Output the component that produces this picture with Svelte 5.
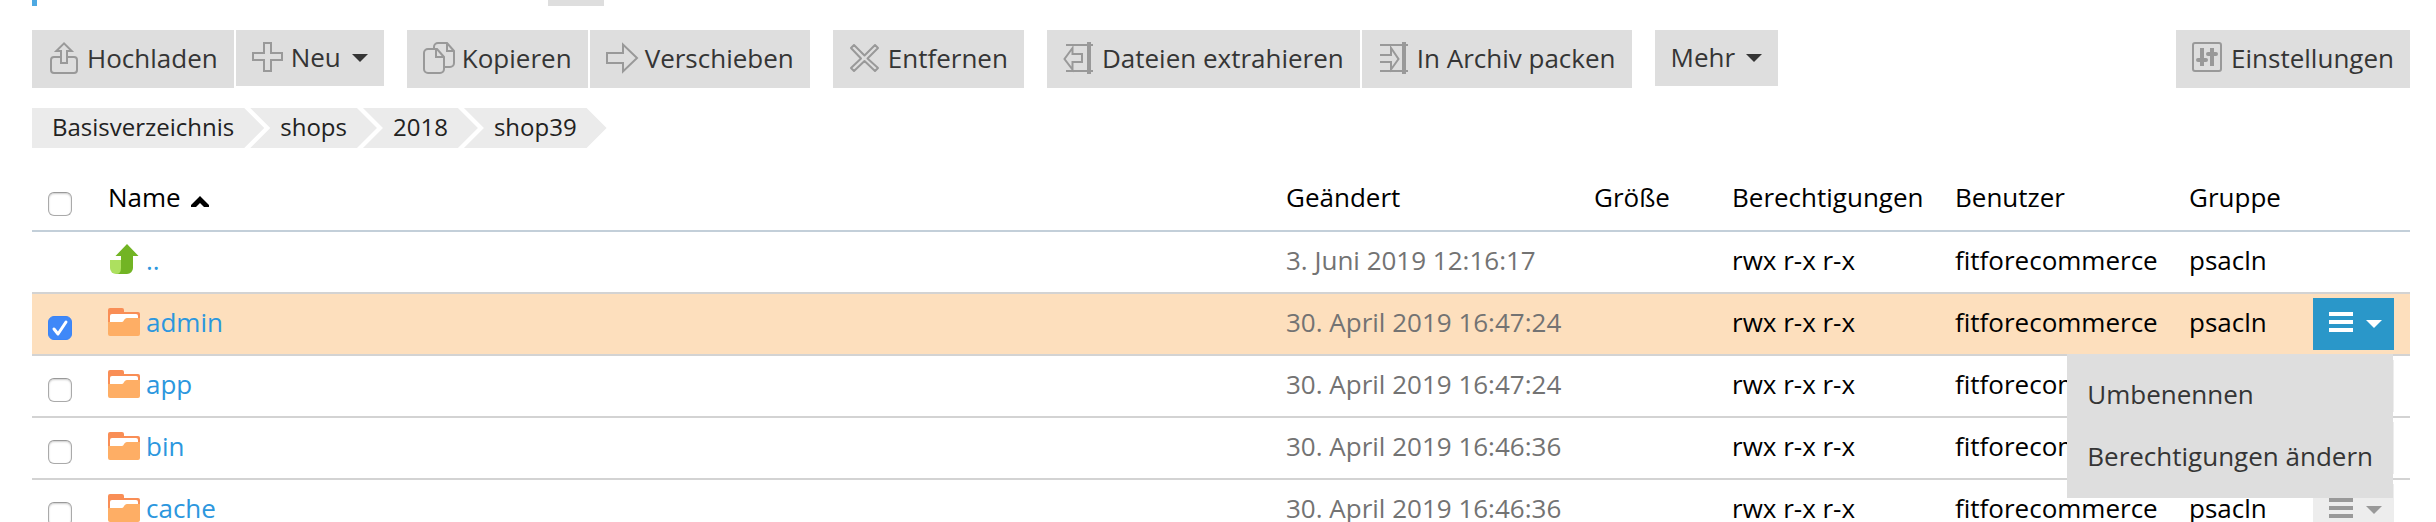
<script>
  const groups = [
    [
      { label: 'Hochladen', icon: 'upload' },
      { label: 'Neu', icon: 'plus', menu: true }
    ],
    [
      { label: 'Kopieren', icon: 'copy' },
      { label: 'Verschieben', icon: 'move' }
    ],
    [{ label: 'Entfernen', icon: 'remove' }],
    [
      { label: 'Dateien extrahieren', icon: 'extract' },
      { label: 'In Archiv packen', icon: 'pack' }
    ],
    [{ label: 'Mehr', menu: true }]
  ];

  const crumbs = ['Basisverzeichnis', 'shops', '2018', 'shop39'];

  let rows = $state([
    { name: 'admin', changed: '30. April 2019 16:47:24', checked: true },
    { name: 'app', changed: '30. April 2019 16:47:24', checked: false },
    { name: 'bin', changed: '30. April 2019 16:46:36', checked: false },
    { name: 'cache', changed: '30. April 2019 16:46:36', checked: false }
  ]);

  let openRow = $state('admin');
</script>

{#snippet icon(name)}
  <svg class="icon" viewBox="0 0 32 32" aria-hidden="true">
    {#if name === 'upload'}
      <path d="M13 15H6a3 3 0 0 0-3 3v10a3 3 0 0 0 3 3h20a3 3 0 0 0 3-3V18a3 3 0 0 0-3-3h-7" />
      <path d="M16 1.400L8.300 9H13v12h6V9h4.700z" />
    {:else if name === 'plus'}
      <path d="M12 1h7v10h11v7H19v11h-7V18H1v-7h11z" />
    {:else if name === 'copy'}
      <path d="M5 7h9l7 8v12a4 4 0 0 1-4 4H5a4 4 0 0 1-4-4V11a4 4 0 0 1 4-4z" />
      <path d="M13 7v8h8M11 7V5a4 4 0 0 1 4-4h9l7 8v12a4 4 0 0 1-4 4h-6M24 1v8h7" />
    {:else if name === 'move'}
      <path d="M1 11h16V2.500L31 16 17 29.500V21H1z" />
    {:else if name === 'remove'}
      <path stroke-linejoin="round" d="M5 3l10.500 10.500L26 3l3 3-10.500 10.500L29 26l-3 3-10.500-10L5 29l-3-3 10-9.500L2 6z" />
    {:else if name === 'extract'}
      <path d="M3 3h27M3 29h27" />
      <path class="thick" d="M26 0v32" />
      <path d="M9.500 6L1.500 17l8 10.500V20H19v-8H9.500z" />
    {:else if name === 'pack'}
      <path d="M2 3h28M2 29h28" />
      <path class="thick" d="M26 0v32" />
      <path d="M2 13h11V6l7.500 11-7.500 10.500V20H2" />
    {:else if name === 'settings'}
      <rect x="1" y="1" width="28" height="28" rx="2" />
      <path class="thick" d="M10 6v18M20 6v18" />
      <path class="thick" stroke-linecap="round" d="M6 18h8M16 12h8" />
    {/if}
  </svg>
{/snippet}

{#snippet folder()}
  <svg class="folder" viewBox="0 0 32 28" aria-hidden="true">
    <path fill="#f98e56" d="M2 0h12a2 2 0 0 1 2 2v2h14a2 2 0 0 1 2 2v14H0V2a2 2 0 0 1 2-2z" />
    <path fill="#fff" d="M4 6h24a2 2 0 0 1 2 2v6H2V8a2 2 0 0 1 2-2z" />
    <path fill="#feae65" d="M0 14h14c2 0 2-4 5-4h13v16a2 2 0 0 1-2 2H2a2 2 0 0 1-2-2z" />
  </svg>
{/snippet}

<main>
  <div class="tabs"><span class="marker"></span><span class="tab"></span></div>

  <div class="toolbar">
    {#each groups as group}
      <div class="group">
        {#each group as item}
          <button type="button" class="tool" class:drop={item.menu}>
            {#if item.icon}{@render icon(item.icon)}{/if}
            <span>{item.label}</span>
            {#if item.menu}<span class="caret"></span>{/if}
          </button>
        {/each}
      </div>
    {/each}
    <button type="button" class="tool last">{@render icon('settings')}<span>Einstellungen</span></button>
  </div>

  <nav class="crumbs">
    {#each crumbs as crumb}<a href="#{crumb}">{crumb}</a>{/each}
  </nav>

  <table>
    <colgroup>
      <col class="c-check" /><col /><col class="c-changed" /><col class="c-size" />
      <col class="c-rights" /><col class="c-user" /><col class="c-group" /><col class="c-action" />
    </colgroup>
    <thead>
      <tr>
        <th><input type="checkbox" aria-label="Name" /></th>
        <th>
          Name
          <svg class="sort" viewBox="0 0 18 11" aria-hidden="true"><path d="M0 11V9L9 0l9 9v2h-5L9 7l-4 4z" /></svg>
        </th>
        <th>Geändert</th>
        <th>Größe</th>
        <th>Berechtigungen</th>
        <th>Benutzer</th>
        <th>Gruppe</th>
        <th></th>
      </tr>
    </thead>
    <tbody>
      <tr>
        <td></td>
        <td>
          <a class="file" href="#up">
            <svg class="folder" viewBox="0 0 32 28" aria-hidden="true">
              <path fill="#ade05f" d="M2 14h12v14H8a6 6 0 0 1-6-6z" />
              <path fill="#72b424" d="M19-2L30.500 10H25v12a6 6 0 0 1-6 6H8q5 0 5-6V10H7.500z" />
            </svg>
            ..
          </a>
        </td>
        <td class="muted">3. Juni 2019 12:16:17</td>
        <td></td>
        <td>rwx r-x r-x</td>
        <td>fitforecommerce</td>
        <td>psacln</td>
        <td></td>
      </tr>
      {#each rows as row}
        <tr class:selected={row.checked}>
          <td><input type="checkbox" aria-label={row.name} bind:checked={row.checked} /></td>
          <td><a class="file" href="#{row.name}">{@render folder()}{row.name}</a></td>
          <td class="muted">{row.changed}</td>
          <td></td>
          <td>rwx r-x r-x</td>
          <td>fitforecommerce</td>
          <td>psacln</td>
          <td>
            <div class="action">
              <button
                type="button"
                class="more"
                class:open={openRow === row.name}
                aria-label={row.name}
                onclick={() => (openRow = openRow === row.name ? '' : row.name)}
              >
                <svg viewBox="0 0 24 20" aria-hidden="true"><path d="M0 0h24v4H0zM0 8h24v4H0zM0 16h24v4H0z" /></svg>
                <span class="caret"></span>
              </button>
              {#if openRow === row.name}
                <div class="menu">
                  <button type="button">Umbenennen</button>
                  <button type="button">Berechtigungen ändern</button>
                </div>
              {/if}
            </div>
          </td>
        </tr>
      {/each}
    </tbody>
  </table>
</main>

<style>
  main {
    box-sizing: border-box;
    height: 100vh;
    overflow: hidden;
    padding: 0 26px 0 32px;
    background: #fff;
    color: #000;
    font: 26px/36px 'Open Sans', 'Noto Sans', sans-serif;
  }
  button {
    border: 0;
    margin: 0;
    font: inherit;
    color: #353535;
    background: #dedede;
    white-space: nowrap;
  }
  .tabs {
    display: flex;
    height: 6px;
    margin-bottom: 24px;
  }
  .marker {
    width: 5px;
    background: #4ea9e2;
  }
  .tab {
    width: 56px;
    margin-left: 511px;
    background: #dedede;
  }
  .toolbar {
    display: flex;
    align-items: flex-start;
    gap: 23px;
  }
  .group {
    display: flex;
    align-items: flex-start;
    gap: 2px;
  }
  .tool {
    display: flex;
    align-items: flex-start;
    gap: 7px;
    padding: 10px 16px 12px;
  }
  .tool.drop {
    padding: 9px 16px 11px;
  }
  .tool .icon {
    margin-top: 2px;
  }
  .tool.drop .icon {
    margin-top: 3px;
  }
  .last {
    margin-left: auto;
  }
  .icon {
    flex: none;
    width: 32px;
    height: 32px;
    fill: none;
    stroke: #999;
    stroke-width: 2;
    overflow: visible;
  }
  .thick {
    stroke-width: 4;
  }
  .caret {
    border: 8px solid transparent;
    border-top-color: currentColor;
    border-bottom: 0;
  }
  .tool .caret {
    margin: 15px 0 0 4px;
  }
  .crumbs {
    display: flex;
    margin: 20px 0;
    font-size: 24px;
    line-height: 38px;
  }
  .crumbs a {
    padding: 0 30px 2px;
    margin-left: -14px;
    background: #ebebeb;
    color: #222;
    text-decoration: none;
    clip-path: polygon(0 0, calc(100% - 20px) 0, 100% 50%, calc(100% - 20px) 100%, 0 100%, 20px 50%);
  }
  .crumbs a:first-child {
    padding-left: 20px;
    margin-left: 0;
    clip-path: polygon(0 0, calc(100% - 20px) 0, 100% 50%, calc(100% - 20px) 100%, 0 100%);
  }
  table {
    width: 100%;
    table-layout: fixed;
    border-collapse: separate;
    border-spacing: 0;
  }
  .c-check { width: 76px; }
  .c-changed { width: 308px; }
  .c-size { width: 138px; }
  .c-rights { width: 223px; }
  .c-user { width: 234px; }
  .c-group { width: 124px; }
  .c-action { width: 97px; }
  th,
  td {
    height: 55px;
    padding: 0 0 5px;
    border-bottom: 2px solid #d3d3d3;
    text-align: left;
    font-weight: 400;
    white-space: nowrap;
  }
  th {
    height: 58px;
    padding-bottom: 4px;
    border-color: #c3cfd9;
  }
  .selected td {
    background: #fddfbd;
  }
  .muted {
    color: #737373;
  }
  .sort {
    width: 18px;
    height: 11px;
    margin-left: 4px;
  }
  .file {
    display: flex;
    align-items: center;
    gap: 6px;
    color: #2c97de;
    text-decoration: none;
  }
  .folder {
    width: 32px;
    height: 28px;
    overflow: visible;
  }
  input {
    appearance: none;
    display: block;
    box-sizing: border-box;
    width: 24px;
    height: 24px;
    margin: 13px 0 0 16px;
    border: 1px solid #aaa;
    border-top-color: #999;
    border-radius: 6px;
    background: #fff;
    box-shadow: inset 0 1px 2px #ccc;
  }
  input:checked {
    border-color: #3a84f7;
    background: #3f88f8 url("data:image/svg+xml,%3Csvg xmlns='http://www.w3.org/2000/svg' viewBox='0 0 22 22'%3E%3Cpath d='M5 12l4 5 8-12' fill='none' stroke='white' stroke-width='3' stroke-linecap='round' stroke-linejoin='round'/%3E%3C/svg%3E");
    box-shadow: none;
  }
  .action {
    position: relative;
    width: 81px;
    height: 51px;
    margin-top: 4px;
  }
  .more {
    display: flex;
    align-items: center;
    gap: 13px;
    width: 100%;
    height: 52px;
    padding: 0 12px 4px 16px;
    background: #ededed;
    color: #999;
  }
  .more svg {
    width: 24px;
    height: 20px;
    fill: currentColor;
  }
  .more .caret {
    margin-top: 4px;
  }
  .more.open {
    background: #2a97c9;
    color: #fff;
  }
  .menu {
    position: absolute;
    z-index: 1;
    top: 56px;
    right: 1px;
    padding: 9px 0 11px;
    background: #dedede;
  }
  .menu button {
    display: block;
    width: 100%;
    padding: 13px 20px;
    text-align: left;
  }
</style>
